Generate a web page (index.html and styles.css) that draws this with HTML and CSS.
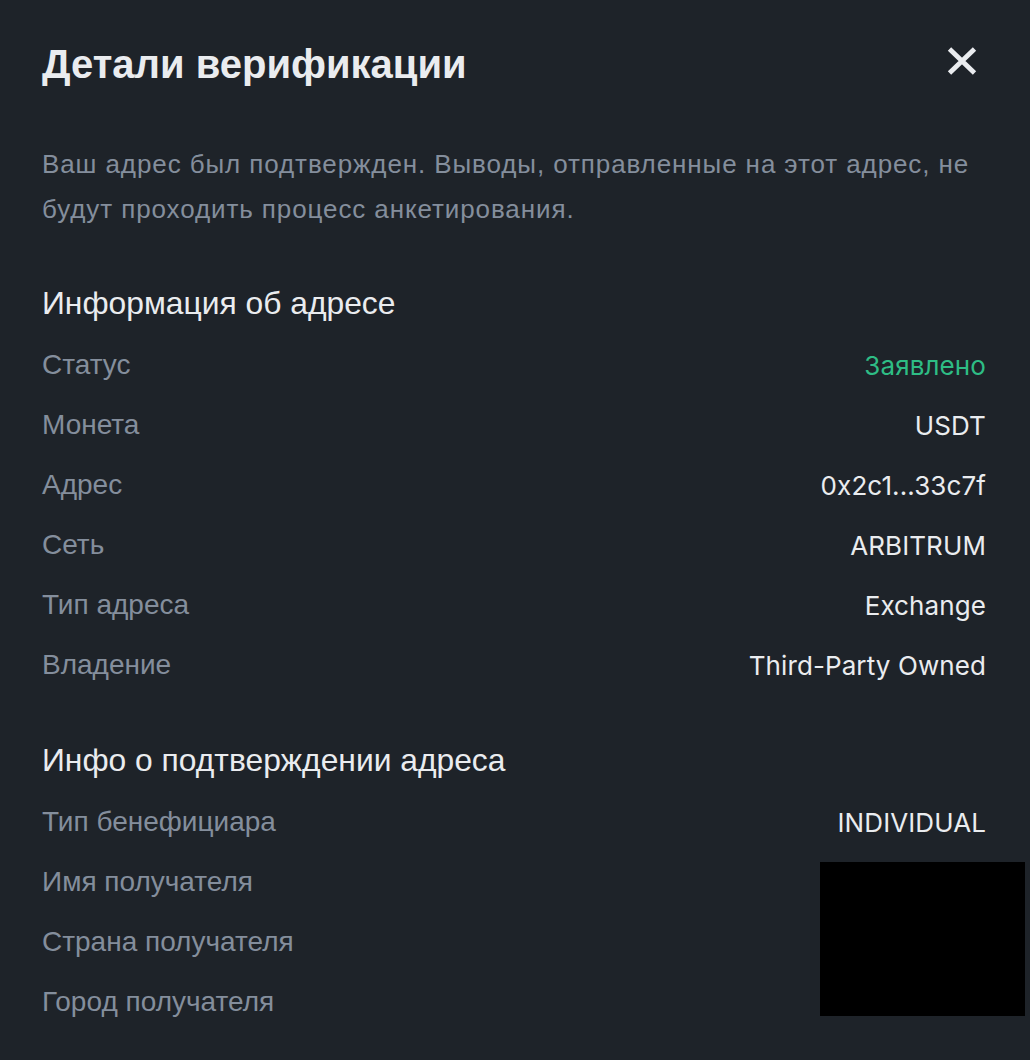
FILE: index.html
```html
<!DOCTYPE html>
<html lang="ru">
<head>
<meta charset="utf-8">
<title>Детали верификации</title>
<link rel="stylesheet" href="styles.css">
</head>
<body>
<div class="modal">
  <div class="header">
    <h1 class="title">Детали верификации</h1>
    <button class="close" aria-label="Закрыть">
      <svg width="30" height="30" viewBox="0 0 30 30"><path d="M2.5 3 L27.5 27 M27.5 3 L2.5 27" stroke="#EAECEF" stroke-width="4.8" stroke-linecap="butt" fill="none"/></svg>
    </button>
  </div>
  <p class="desc">Ваш адрес был подтвержден. Выводы, отправленные на этот адрес, не будут проходить процесс анкетирования.</p>

  <h2 class="section">Информация об адресе</h2>
  <div class="rows">
    <div class="row"><span class="label">Статус</span><span class="value green">Заявлено</span></div>
    <div class="row"><span class="label">Монета</span><span class="value">USDT</span></div>
    <div class="row"><span class="label">Адрес</span><span class="value">0x2c1...33c7f</span></div>
    <div class="row"><span class="label">Сеть</span><span class="value">ARBITRUM</span></div>
    <div class="row"><span class="label">Тип адреса</span><span class="value">Exchange</span></div>
    <div class="row"><span class="label">Владение</span><span class="value">Third-Party Owned</span></div>
  </div>

  <h2 class="section section2">Инфо о подтверждении адреса</h2>
  <div class="rows">
    <div class="row"><span class="label">Тип бенефициара</span><span class="value">INDIVIDUAL</span></div>
    <div class="row"><span class="label">Имя получателя</span><span class="value"></span></div>
    <div class="row"><span class="label">Страна получателя</span><span class="value"></span></div>
    <div class="row"><span class="label">Город получателя</span><span class="value"></span></div>
  </div>
  <div class="redact"></div>
</div>
</body>
</html>
```

FILE: styles.css
```css
html, body {
  margin: 0;
  padding: 0;
  background: #1e2329;
}
.modal {
  position: relative;
  width: 1030px;
  height: 1060px;
  box-sizing: border-box;
  padding: 40px 44px 0 42px;
  background: #1e2329;
  font-family: "Liberation Sans", Arial, sans-serif;
  color: #eaecef;
}
.header {
  display: flex;
  justify-content: space-between;
  align-items: center;
  height: 48px;
}
.title {
  margin: 0;
  font-size: 40px;
  font-weight: 700;
  line-height: 48px;
  color: #eaecef;
}
.close {
  background: none;
  border: 0;
  padding: 0;
  margin-right: 9px;
  margin-top: -6px;
  width: 30px;
  height: 30px;
  display: flex;
}
.desc {
  margin: 54px 0 0 0;
  font-size: 26px;
  letter-spacing: 0.9px;
  line-height: 45px;
  color: #848e9c;
}
.section {
  margin: 51px 0 12px 0;
  font-size: 31.8px;
  font-weight: 400;
  line-height: 40px;
  color: #eaecef;
}
.section2 {
  margin-top: 45px;
}
.rows {
  display: flex;
  flex-direction: column;
}
.row {
  display: flex;
  justify-content: space-between;
  align-items: center;
  height: 60px;
}
.label {
  font-size: 28px;
  color: #848e9c;
}
.value {
  font-family: Inter, "Liberation Sans", sans-serif;
  font-size: 26px;
  letter-spacing: 0.1px;
  line-height: 30px;
  padding-top: 2px;
  color: #eaecef;
}
.value.green {
  color: #2ebd85;
}
.redact {
  position: absolute;
  left: 820px;
  top: 862px;
  width: 205px;
  height: 154px;
  background: #000;
}
```
